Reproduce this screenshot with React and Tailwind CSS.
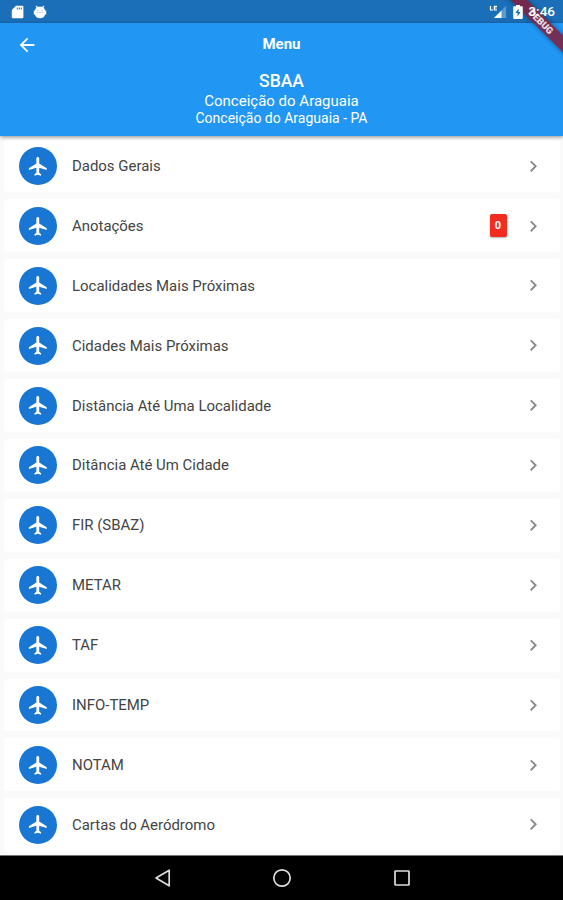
const items = [
  'Dados Gerais',
  'Anotações',
  'Localidades Mais Próximas',
  'Cidades Mais Próximas',
  'Distância Até Uma Localidade',
  'Ditância Até Um Cidade',
  'FIR (SBAZ)',
  'METAR',
  'TAF',
  'INFO-TEMP',
  'NOTAM',
  'Cartas do Aeródromo',
];

function StatusBar() {
  return (
    <div className="flex h-[23px] shrink-0 items-center bg-[#1a6fb8] pl-[11px] pr-2 text-white">
      <svg className="mr-2 h-[14px] w-[13px]" viewBox="0 0 13 14" fill="currentColor">
        <path fillRule="evenodd" d="M5 .8h6.200q1.200 0 1.200 1.200v10q0 1.200-1.200 1.200H2Q.8 13.200.8 12V5zM5.800 2.500v2h1v-2zm2 0v2h1v-2zm2 0v2h1v-2z" />
      </svg>
      <svg className="h-[14px] w-4" viewBox="0 0 16 14" fill="currentColor">
        <path d="M4 .5l1.500 1.200h5L12 .5l.5.5-1 1.500Q13 4 13 5.500h1.200v4H13Q12.500 13.200 8 13.200T3 9.500H1.800v-4H3Q3 4 4.500 2.500L3.500 1z" />
        <path d="M5 5.500h2M9 5.500h2M4.500 7.500h7" stroke="#9fc5e5" strokeWidth=".6" />
      </svg>
      <div className="relative z-30 ml-auto flex items-center">
        <svg className="mr-[6px] h-[14px] w-[18px]" viewBox="0 0 18 14">
          <path d="M17 1v12H5z" fill="#5c9bd0" />
          <path d="M12.500 5.500V13H5z" fill="#fff" />
          <path d="M1.500 1v4h2.500M8 1.300H5.300v3.700H8M5.300 3h2.400" fill="none" stroke="#fff" strokeWidth="1.200" />
        </svg>
        <svg className="mr-[5px] h-[14px] w-[10px]" viewBox="0 0 10 14">
          <path d="M3 0h4v1.300h2q.8 0 .8.8v11q0 .8-.8.8H1q-.8 0-.8-.8v-11q0-.8.8-.8h2z" fill="#fff" />
          <path d="M5.600 3.500L2.500 8h2v3.500L7.600 7h-2z" fill="#1a6fb8" />
        </svg>
        <span className="text-[13.500px] leading-none font-medium">3:46</span>
      </div>
    </div>
  );
}

function Header() {
  return (
    <header className="relative z-10 flex h-[113px] shrink-0 flex-col bg-[#2196f3] text-white shadow-[0_1px_4px_rgba(0,0,0,0.45)]">
      <div className="grid h-[43px] grid-cols-[56px_1fr_56px] items-center">
        <svg className="ml-[16px] h-[22px] w-[22px]" viewBox="0 0 24 24" fill="currentColor">
          <path d="M20 11H7.830l5.590-5.590L12 4l-8 8 8 8 1.410-1.410L7.830 13H20v-2z" />
        </svg>
        <h1 className="text-center text-[15px] leading-none font-bold">Menu</h1>
      </div>
      <div className="flex flex-col items-center pt-[5px]">
        <p className="text-[17.500px] leading-[21px] font-medium">SBAA</p>
        <p className="text-[15px] leading-[18px]">Conceição do Araguaia</p>
        <p className="text-[14px] leading-[17px]">Conceição do Araguaia - PA</p>
      </div>
    </header>
  );
}

function MenuRow({ label, badge }) {
  return (
    <li className="h-[59.900px] pt-[3.500px] pr-[3px] pb-[3.500px] pl-[4px]">
      <div className="flex h-full items-center rounded-[3px] bg-white pr-[16px] pl-[15px]">
        <span className="flex h-[38px] w-[38px] items-center justify-center rounded-full bg-[#1976d2]">
          <svg className="h-[22.500px] w-[22.500px]" viewBox="0 0 24 24" fill="#fff">
            <path d="M21 16v-2l-8-5V3.500c0-.83-.67-1.500-1.500-1.500S10 2.670 10 3.500V9l-8 5v2l8-2.500V19l-2 1.500V22l3.500-1 3.500 1v-1.500L13 19v-5.500l8 2.500z" />
          </svg>
        </span>
        <span className="ml-[15px] pt-[1px] text-[14.950px] leading-none text-[#444]">{label}</span>
        <span className="ml-auto flex items-center">
          {badge !== undefined && (
            <span className="mr-[15px] flex h-[23px] w-[17px] items-center justify-center rounded-[2px] bg-[#f12c20] text-[11px] leading-none font-bold text-white shadow-[0_1px_2px_rgba(0,0,0,0.3)]">
              {badge}
            </span>
          )}
          <svg className="h-[22.500px] w-[22.500px]" viewBox="0 0 24 24" fill="#8a8a8a">
            <path d="M8.590 16.590L13.170 12 8.590 7.410 10 6l6 6-6 6-1.410-1.410z" />
          </svg>
        </span>
      </div>
    </li>
  );
}

function NavBar() {
  return (
    <nav className="flex h-[45px] shrink-0 items-center justify-center gap-[98px] border-t border-[#777] bg-black">
      <svg className="h-[22px] w-[22px]" viewBox="0 0 22 22" fill="none" stroke="#ddd" strokeWidth="1.700" strokeLinejoin="round">
        <path d="M18.200 3.200v15.600L5 11z" />
      </svg>
      <svg className="h-[22px] w-[22px]" viewBox="0 0 22 22" fill="none" stroke="#ddd" strokeWidth="1.700">
        <circle cx="11" cy="11" r="8.200" />
      </svg>
      <svg className="h-[22px] w-[22px]" viewBox="0 0 22 22" fill="none" stroke="#ddd" strokeWidth="1.700">
        <rect x="4" y="4" width="14" height="14" rx=".5" />
      </svg>
    </nav>
  );
}

export default function App() {
  return (
    <div className="relative flex h-[900px] w-[563px] flex-col overflow-hidden bg-[#fafafa] font-[Roboto,sans-serif]">
      <StatusBar />
      <Header />
      <ul className="min-h-0 flex-1 overflow-hidden">
        {items.map((label) => (
          <MenuRow key={label} label={label} badge={label === 'Anotações' ? 0 : undefined} />
        ))}
      </ul>
      <NavBar />
      <div className="absolute top-[16px] left-[491px] z-20 flex h-[11.500px] w-[100px] rotate-45 items-center justify-center bg-[#7c2444]/90 text-[9.500px] leading-none font-black text-white/85 shadow-[0_0_5px_rgba(0,0,0,0.4)]">
        DEBUG
      </div>
    </div>
  );
}
